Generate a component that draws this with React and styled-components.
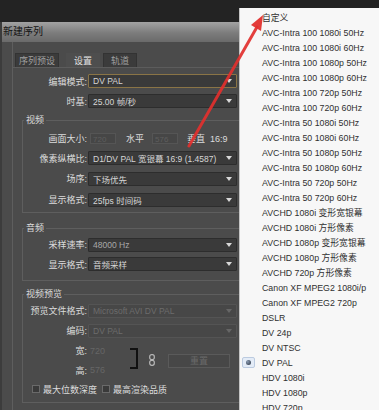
import styled, { createGlobalStyle } from "styled-components";

const GlobalStyle = createGlobalStyle`
  html, body {
    margin: 0;
    padding: 0;
    background: #232323;
  }
  body {
    font-family: "Liberation Sans", "Noto Sans CJK SC", sans-serif;
  }
`;

const Page = styled.div`
  position: relative;
  width: 379px;
  height: 410px;
  overflow: hidden;
  display: flex;
  background: #232323;
`;

const DialogCol = styled.div`
  width: 239px;
  flex-shrink: 0;
  padding-top: 22px;
  display: flex;
  flex-direction: column;
`;

const Dialog = styled.div`
  flex: 1;
  display: flex;
  flex-direction: column;
  background: #4b4b4b;
  border-left: 2px solid #3c3c3c;
  overflow: hidden;
`;

const TitleBar = styled.div`
  height: 20px;
  line-height: 20px;
  padding-left: 1px;
  background: linear-gradient(#a2a2a2, #7c7c7c 55%, #6a6a6a);
  color: #141414;
  font-size: 10px;
`;

const Body = styled.div`
  flex: 1;
  padding-left: 10px;
  display: flex;
`;

const Frame = styled.div`
  flex: 1;
  border-left: 1px solid #5e5e5e;
  padding-top: 11px;
  display: flex;
  flex-direction: column;
`;

const TabBar = styled.div`
  display: flex;
  padding-left: 2px;
`;

const Tab = styled.div`
  height: 14px;
  line-height: 14px;
  padding: 0 ${(p) => p.$pad}px;
  margin-left: ${(p) => p.$gap}px;
  font-size: 9px;
  box-sizing: border-box;
  background: ${(p) => (p.$active ? "#4e4e4e" : "#3b3b3b")};
  border: 1px solid ${(p) => (p.$active ? "#4e4e4e" : "#333")};
  border-bottom: none;
  color: ${(p) => (p.$active ? "#e2e2e2" : "#a0a0a0")};
`;

const TabPanel = styled.div`
  border-top: 1px solid #5c5c5c;
  padding-top: 3px;
  display: flex;
  flex-direction: column;
`;

const Row = styled.div`
  display: flex;
  align-items: center;
  height: ${(p) => p.$h}px;
`;

const Label = styled.div`
  width: ${(p) => p.$w}px;
  flex-shrink: 0;
  text-align: right;
  padding-right: 1px;
  box-sizing: border-box;
  color: #dcdcdc;
  font-size: 9px;
  white-space: nowrap;
`;

const Select = styled.div`
  flex: 1;
  height: 14px;
  margin-right: 2px;
  box-sizing: border-box;
  display: flex;
  align-items: center;
  padding-left: 4px;
  background: ${(p) => (p.$disabled ? "#474747" : "#3a3a3a")};
  border: 1px solid
    ${(p) => (p.$focus ? "#8a7446" : p.$disabled ? "#545454" : "#2d2d2d")};
  border-radius: 1px;
  color: ${(p) => (p.$disabled ? "#6c6c6c" : p.$dim ? "#a8a8a8" : "#d6d6d6")};
  font-size: 8.5px;
  white-space: nowrap;
  overflow: hidden;
`;

const Arrow = styled.span`
  margin-left: auto;
  margin-right: 4px;
  width: 0;
  height: 0;
  border-left: 3px solid transparent;
  border-right: 3px solid transparent;
  border-top: 4px solid ${(p) => (p.$disabled ? "#666" : "#d8d8d8")};
`;

const Group = styled.fieldset`
  margin: ${(p) => p.$mt}px 0 0 9px;
  padding: ${(p) => p.$pt || 0}px 0 ${(p) => p.$pb}px 0;
  min-width: 0;
  border: 1px solid #5e5e5e;
  border-right: none;
`;

const Legend = styled.legend`
  padding: 0 2px;
  margin-left: 1px;
  font-size: 9px;
  line-height: 14px;
  color: #dcdcdc;
`;

const SmallInput = styled.div`
  width: 26px;
  height: 11px;
  margin-left: ${(p) => p.$ml}px;
  background: #464646;
  border: 1px solid #555;
  color: #5e5e5e;
  font-size: 8px;
  line-height: 11px;
  padding-left: 2px;
  box-sizing: border-box;
`;

const Plain = styled.span`
  margin-left: ${(p) => p.$ml}px;
  font-size: 9px;
  color: ${(p) => p.$color || "#dcdcdc"};
  white-space: nowrap;
`;

const SizeBlock = styled.div`
  display: flex;
  align-items: center;
`;

const SizeCol = styled.div`
  width: 102px;
  display: flex;
  flex-direction: column;
`;

const Bracket = styled.div`
  width: 6px;
  height: 17px;
  margin-left: 5px;
  margin-top: -4px;
  border: 2px solid #111;
  border-left: none;
`;

const LinkIcon = styled.svg`
  margin-left: 11px;
  margin-top: -1px;
`;

const ResetButton = styled.div`
  width: 62px;
  height: 14px;
  margin-left: 13px;
  box-sizing: border-box;
  border: 1px solid #5a5a5a;
  background: #474747;
  color: #6a6a6a;
  font-size: 9px;
  line-height: 12px;
  text-align: center;
`;

const CheckBox = styled.span`
  width: 8px;
  height: 8px;
  margin-left: ${(p) => p.$ml}px;
  margin-right: 3px;
  box-sizing: border-box;
  border: 1px solid #6a6a6a;
  background: #3a3a3a;
  flex-shrink: 0;
`;

const Menu = styled.div`
  flex: 1;
  margin-top: 8px;
  padding-top: 2px;
  background: #f7f7f7;
  border-left: 1px solid #c4c4c4;
  display: flex;
  flex-direction: column;
`;

const MenuItem = styled.div`
  display: flex;
  align-items: center;
  height: 15px;
  flex-shrink: 0;
  font-size: 8.8px;
  color: #303030;
  white-space: nowrap;
`;

const Gutter = styled.div`
  width: 22px;
  flex-shrink: 0;
  display: flex;
  align-items: center;
  padding-left: 2px;
  box-sizing: border-box;
`;

const CheckMark = styled.div`
  width: 13px;
  height: 11px;
  box-sizing: border-box;
  border: 1px solid #bccbe0;
  border-radius: 2px;
  background: #e4ecf7;
  display: flex;
  align-items: center;
  justify-content: center;
  &::after {
    content: "";
    width: 5px;
    height: 5px;
    border-radius: 50%;
    background: radial-gradient(circle at 35% 35%, #8a9ab0, #26303f);
  }
`;

const Overlay = styled.svg`
  position: absolute;
  left: 0;
  top: 0;
  pointer-events: none;
`;

const presets = [
  "自定义",
  "AVC-Intra 100 1080i 50Hz",
  "AVC-Intra 100 1080i 60Hz",
  "AVC-Intra 100 1080p 50Hz",
  "AVC-Intra 100 1080p 60Hz",
  "AVC-Intra 100 720p 50Hz",
  "AVC-Intra 100 720p 60Hz",
  "AVC-Intra 50 1080i 50Hz",
  "AVC-Intra 50 1080i 60Hz",
  "AVC-Intra 50 1080p 50Hz",
  "AVC-Intra 50 1080p 60Hz",
  "AVC-Intra 50 720p 50Hz",
  "AVC-Intra 50 720p 60Hz",
  "AVCHD 1080i 变形宽银幕",
  "AVCHD 1080i 方形像素",
  "AVCHD 1080p 变形宽银幕",
  "AVCHD 1080p 方形像素",
  "AVCHD 720p 方形像素",
  "Canon XF MPEG2 1080i/p",
  "Canon XF MPEG2 720p",
  "DSLR",
  "DV 24p",
  "DV NTSC",
  "DV PAL",
  "HDV 1080i",
  "HDV 1080p",
  "HDV 720p",
];

function Dropdown({ children, focus, dim, disabled }) {
  return (
    <Select $focus={focus} $dim={dim} $disabled={disabled}>
      {children}
      <Arrow $disabled={disabled} />
    </Select>
  );
}

export default function App() {
  return (
    <>
      <GlobalStyle />
      <Page>
        <DialogCol>
          <Dialog>
            <TitleBar>新建序列</TitleBar>
            <Body>
              <Frame>
                <TabBar>
                  <Tab $pad={3} $gap={0}>序列预设</Tab>
                  <Tab $pad={7} $gap={7} $active>设置</Tab>
                  <Tab $pad={7} $gap={3}>轨道</Tab>
                </TabBar>
                <TabPanel>
                  <Row $h={20}>
                    <Label $w={75}>编辑模式:</Label>
                    <Dropdown focus>DV PAL</Dropdown>
                  </Row>
                  <Row $h={20}>
                    <Label $w={75}>时基:</Label>
                    <Dropdown>25.00 帧/秒</Dropdown>
                  </Row>

                  <Group $mt={2} $pt={2} $pb={2}>
                    <Legend>视频</Legend>
                    <Row $h={19}>
                      <Label $w={65}>画面大小:</Label>
                      <SmallInput $ml={2}>720</SmallInput>
                      <Plain $ml={10}>水平</Plain>
                      <SmallInput $ml={8}>576</SmallInput>
                      <Plain $ml={9}>垂直</Plain>
                      <Plain $ml={5}>16:9</Plain>
                    </Row>
                    <Row $h={20}>
                      <Label $w={65}>像素纵横比:</Label>
                      <Dropdown>D1/DV PAL 宽银幕 16:9 (1.4587)</Dropdown>
                    </Row>
                    <Row $h={21}>
                      <Label $w={65}>场序:</Label>
                      <Dropdown>下场优先</Dropdown>
                    </Row>
                    <Row $h={21}>
                      <Label $w={65}>显示格式:</Label>
                      <Dropdown>25fps 时间码</Dropdown>
                    </Row>
                  </Group>

                  <Group $mt={8} $pb={6}>
                    <Legend>音频</Legend>
                    <Row $h={19}>
                      <Label $w={65}>采样速率:</Label>
                      <Dropdown dim>48000 Hz</Dropdown>
                    </Row>
                    <Row $h={20}>
                      <Label $w={65}>显示格式:</Label>
                      <Dropdown>音频采样</Dropdown>
                    </Row>
                  </Group>

                  <Group $mt={6} $pb={4}>
                    <Legend>视频预览</Legend>
                    <Row $h={19}>
                      <Label $w={65}>预览文件格式:</Label>
                      <Dropdown disabled>Microsoft AVI DV PAL</Dropdown>
                    </Row>
                    <Row $h={21}>
                      <Label $w={65}>编码:</Label>
                      <Dropdown disabled>DV PAL</Dropdown>
                    </Row>
                    <SizeBlock>
                      <SizeCol>
                        <Row $h={19}>
                          <Label $w={65}>宽:</Label>
                          <Plain $ml={2} $color="#666">720</Plain>
                        </Row>
                        <Row $h={20}>
                          <Label $w={65}>高:</Label>
                          <Plain $ml={2} $color="#666">576</Plain>
                        </Row>
                      </SizeCol>
                      <Bracket />
                      <LinkIcon width="6" height="12" viewBox="0 0 6 12">
                        <rect x="0.7" y="0.7" width="4.6" height="5" rx="2" fill="none" stroke="#b8b8b8" strokeWidth="1.2" />
                        <rect x="0.7" y="6.3" width="4.6" height="5" rx="2" fill="none" stroke="#b8b8b8" strokeWidth="1.2" />
                      </LinkIcon>
                      <ResetButton>重置</ResetButton>
                    </SizeBlock>
                    <Row $h={18}>
                      <CheckBox $ml={9} />
                      <Plain $ml={0}>最大位数深度</Plain>
                      <CheckBox $ml={5} />
                      <Plain $ml={0}>最高渲染品质</Plain>
                    </Row>
                  </Group>
                </TabPanel>
              </Frame>
            </Body>
          </Dialog>
        </DialogCol>

        <Menu>
          {presets.map((name) => (
            <MenuItem key={name}>
              <Gutter>{name === "DV PAL" && <CheckMark />}</Gutter>
              {name}
            </MenuItem>
          ))}
        </Menu>

        <Overlay width="379" height="410" viewBox="0 0 379 410">
          <line x1="189" y1="146" x2="257" y2="27" stroke="#e2302e" strokeWidth="3" strokeLinecap="round" opacity="0.92" />
          <polygon points="263,15 261,31 251,25" fill="#e2302e" opacity="0.95" />
        </Overlay>
      </Page>
    </>
  );
}
